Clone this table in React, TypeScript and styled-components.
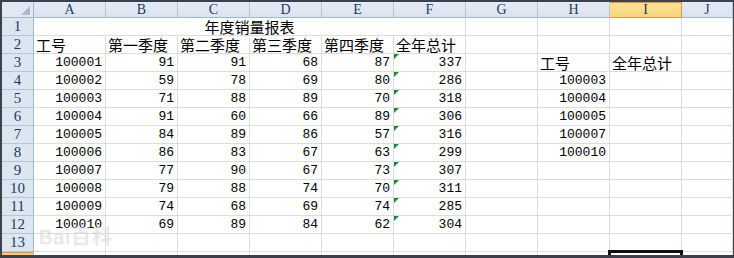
import React from "react";
import styled, { createGlobalStyle, css } from "styled-components";

const Global = createGlobalStyle`
  html, body { margin: 0; padding: 0; background: #3c414b; }
  body { width: 734px; height: 258px; overflow: hidden; }
`;

const Frame = styled.div`
  position: relative;
  width: 734px;
  height: 258px;
  box-sizing: border-box;
  border-top: 2px solid #3c414b;
  border-left: 2px solid #3c414b;
  border-right: 1px solid #3c414b;
  border-bottom: 3px solid #3c414b;
  background: #ffffff;
  overflow: hidden;
`;

const Sheet = styled.div`
  display: grid;
  grid-template-columns: 32px repeat(9, 72px) 51px;
  grid-template-rows: 16px repeat(14, 18px);
`;

const Corner = styled.div`
  position: relative;
  background: #dfe8f3;
  border-right: 1px solid #9eb6ce;
  border-bottom: 1px solid #9eb6ce;
  &::after {
    content: "";
    position: absolute;
    right: 3px;
    bottom: 2px;
    width: 0;
    height: 0;
    border-left: 9px solid transparent;
    border-bottom: 9px solid #a9b8ca;
  }
`;

const ColHead = styled.div<{ $active?: boolean }>`
  box-sizing: border-box;
  display: flex;
  align-items: center;
  justify-content: center;
  font-family: "Liberation Serif", serif;
  font-size: 14px;
  color: #1f3a5f;
  background: linear-gradient(#e3ebf5, #dae4f0);
  border-right: 1px solid #b4c6da;
  border-bottom: 1px solid #9eb6ce;
  ${(p) =>
    p.$active &&
    css`
      background: linear-gradient(#fbe39a, #f8d47a);
      border: 1px solid #f29436;
      border-left: none;
    `}
`;

const RowHead = styled.div<{ $active?: boolean }>`
  box-sizing: border-box;
  display: flex;
  align-items: center;
  justify-content: center;
  font-family: "Liberation Serif", serif;
  font-size: 15px;
  color: #1f3a5f;
  background: #dce6f1;
  border-right: 1px solid #9eb6ce;
  border-bottom: 1px solid #b4c6da;
  ${(p) =>
    p.$active &&
    css`
      background: #f8cf6c;
      border-top: 1px solid #f29436;
    `}
`;

const Cell = styled.div<{ $kind?: "text" | "num"; $span?: number; $center?: boolean; $flag?: boolean; $active?: boolean }>`
  position: relative;
  box-sizing: border-box;
  display: flex;
  align-items: flex-end;
  justify-content: ${(p) => (p.$center ? "center" : p.$kind === "num" ? "flex-end" : "flex-start")};
  padding: 0 ${(p) => (p.$kind === "num" ? "3px" : "2px")} 0 2px;
  border-right: 1px solid #dadcdd;
  border-bottom: 1px solid #dadcdd;
  white-space: nowrap;
  overflow: visible;
  color: #000;
  ${(p) => (p.$span ? `grid-column: span ${p.$span};` : "")}
  ${(p) =>
    p.$kind === "num"
      ? css`
          font-family: "Liberation Mono", monospace;
          font-size: 13px;
          line-height: 16px;
        `
      : css`
          font-family: "Noto Sans CJK SC", sans-serif;
          font-size: 15px;
          line-height: 17px;
        `}
  ${(p) =>
    p.$flag &&
    css`
      &::before {
        content: "";
        position: absolute;
        left: 0;
        top: 0;
        width: 0;
        height: 0;
        border-top: 5px solid #1b8a2b;
        border-right: 5px solid transparent;
      }
    `}
  ${(p) =>
    p.$active &&
    css`
      &::after {
        content: "";
        position: absolute;
        left: -2px;
        top: -2px;
        right: -2px;
        bottom: -2px;
        border: 3px solid #111;
      }
    `}
`;

const Watermark = styled.div`
  position: absolute;
  left: 37px;
  top: 219px;
  font-family: "Liberation Sans", "Noto Sans CJK SC", sans-serif;
  font-size: 20px;
  color: rgba(255, 255, 255, 0.5);
  text-shadow: 0 0 1px rgba(150, 150, 150, 0.5);
  pointer-events: none;
  letter-spacing: 1px;
`;

const cols = ["A", "B", "C", "D", "E", "F", "G", "H", "I", "J"];

const data: number[][] = [
  [100001, 91, 91, 68, 87, 337],
  [100002, 59, 78, 69, 80, 286],
  [100003, 71, 88, 89, 70, 318],
  [100004, 91, 60, 66, 89, 306],
  [100005, 84, 89, 86, 57, 316],
  [100006, 86, 83, 67, 63, 299],
  [100007, 77, 90, 67, 73, 307],
  [100008, 79, 88, 74, 70, 311],
  [100009, 74, 68, 69, 74, 285],
  [100010, 69, 89, 84, 62, 304],
];

const side: (number | null)[] = [null, 100003, 100004, 100005, 100007, 100010, null, null, null, null];

export default function App() {
  return (
    <>
      <Global />
      <Frame>
        <Sheet>
          <Corner />
          {cols.map((c) => (
            <ColHead key={c} $active={c === "I"}>
              {c}
            </ColHead>
          ))}

          <RowHead>1</RowHead>
          <Cell $span={6} $center>
            年度销量报表
          </Cell>
          <Cell />
          <Cell />
          <Cell />
          <Cell />

          <RowHead>2</RowHead>
          {["工号", "第一季度", "第二季度", "第三季度", "第四季度", "全年总计"].map((t) => (
            <Cell key={t}>{t}</Cell>
          ))}
          <Cell />
          <Cell />
          <Cell />
          <Cell />

          {data.map((row, i) => (
            <React.Fragment key={i}>
              <RowHead>{i + 3}</RowHead>
              {row.map((v, j) => (
                <Cell key={j} $kind="num" $flag={j === 5}>
                  {v}
                </Cell>
              ))}
              <Cell />
              {i === 0 ? (
                <>
                  <Cell>工号</Cell>
                  <Cell>全年总计</Cell>
                </>
              ) : (
                <>
                  <Cell $kind="num">{side[i] ?? ""}</Cell>
                  <Cell />
                </>
              )}
              <Cell />
            </React.Fragment>
          ))}

          <RowHead>13</RowHead>
          {Array.from({ length: 10 }).map((_, j) => (
            <Cell key={j} />
          ))}

          <RowHead $active />
          {Array.from({ length: 10 }).map((_, j) => (
            <Cell key={j} $active={j === 8} />
          ))}
        </Sheet>
        <Watermark>Bai百科</Watermark>
      </Frame>
    </>
  );
}
